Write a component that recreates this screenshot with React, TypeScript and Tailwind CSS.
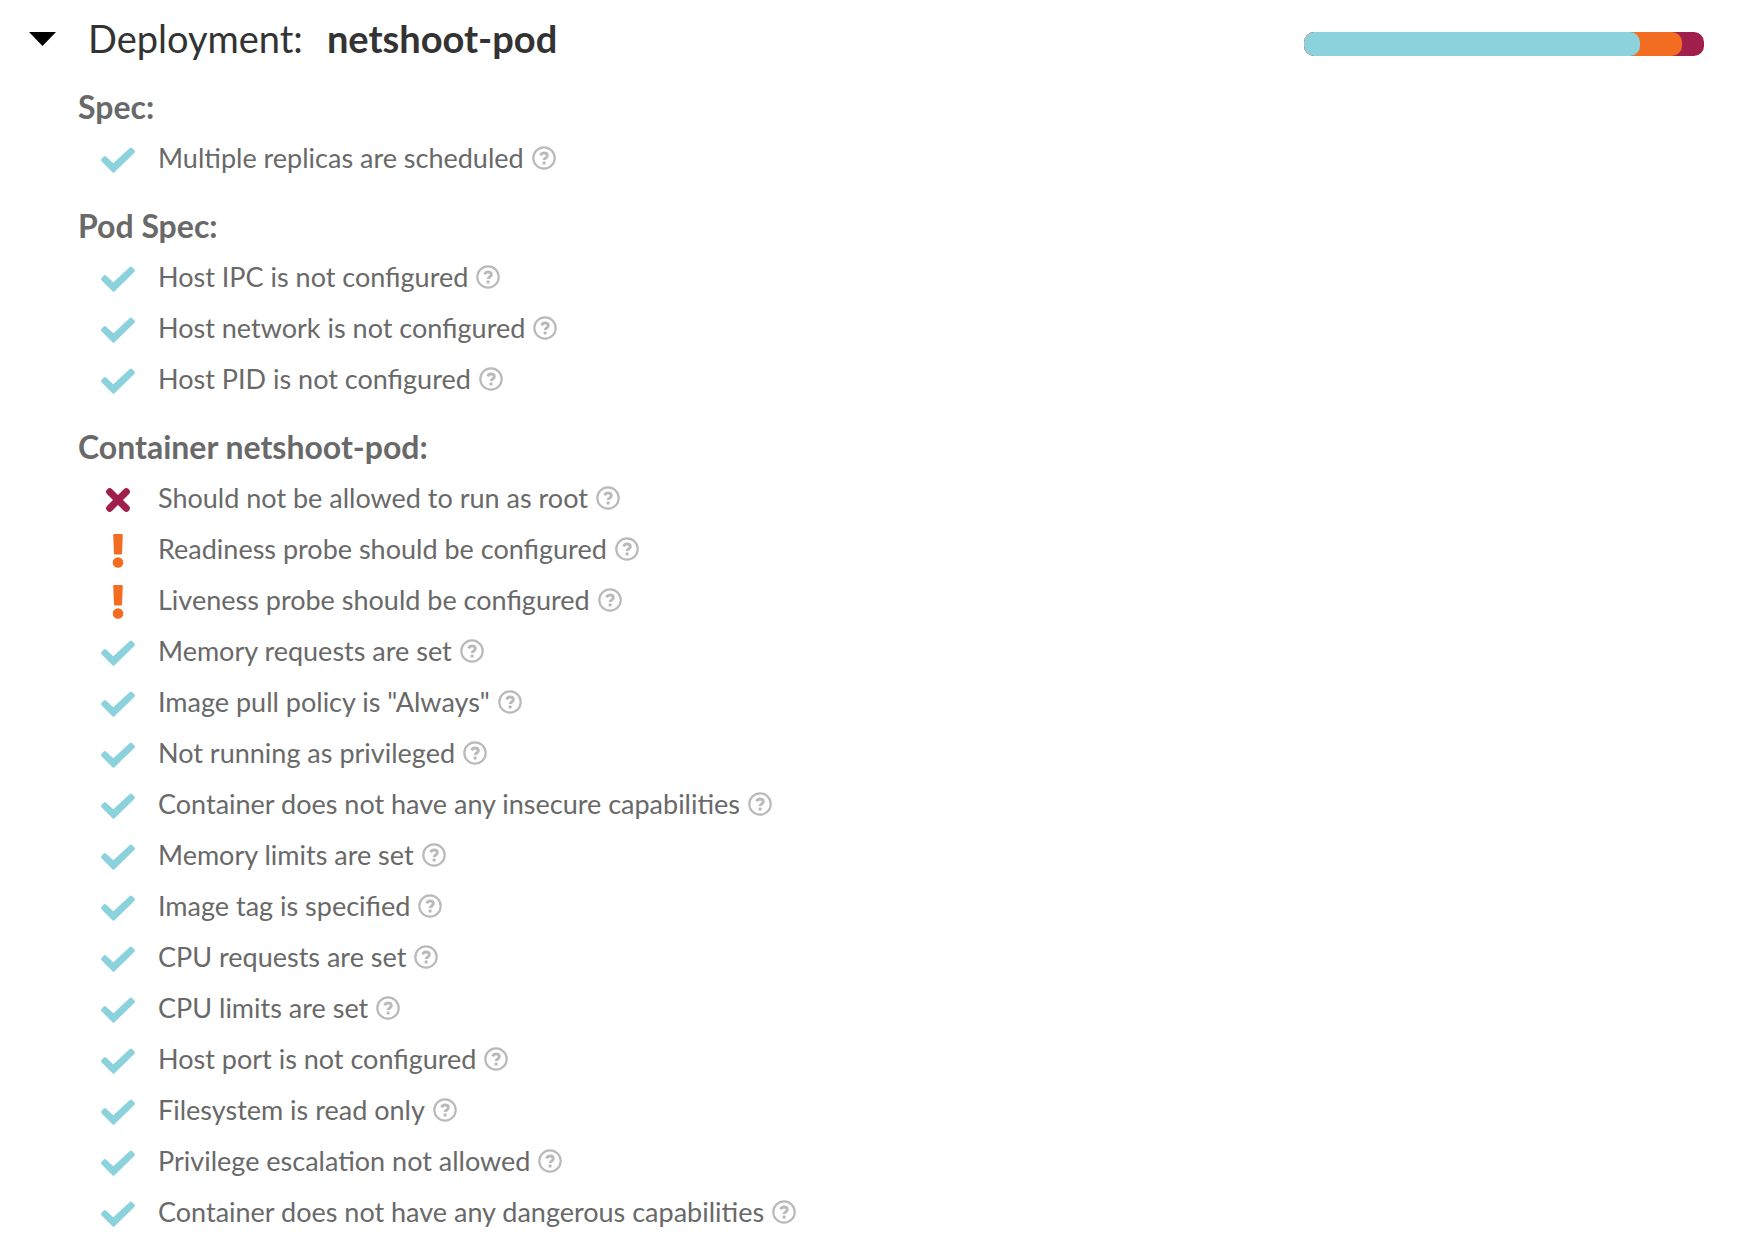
type Status = "success" | "warning" | "danger";
type Check = { label: string; status?: Status };
type Group = { title: string; checks: Check[] };

const groups: Group[] = [
  { title: "Spec:", checks: [{ label: "Multiple replicas are scheduled" }] },
  {
    title: "Pod Spec:",
    checks: [
      { label: "Host IPC is not configured" },
      { label: "Host network is not configured" },
      { label: "Host PID is not configured" },
    ],
  },
  {
    title: "Container netshoot-pod:",
    checks: [
      { label: "Should not be allowed to run as root", status: "danger" },
      { label: "Readiness probe should be configured", status: "warning" },
      { label: "Liveness probe should be configured", status: "warning" },
      { label: "Memory requests are set" },
      { label: 'Image pull policy is "Always"' },
      { label: "Not running as privileged" },
      { label: "Container does not have any insecure capabilities" },
      { label: "Memory limits are set" },
      { label: "Image tag is specified" },
      { label: "CPU requests are set" },
      { label: "CPU limits are set" },
      { label: "Host port is not configured" },
      { label: "Filesystem is read only" },
      { label: "Privilege escalation not allowed" },
      { label: "Container does not have any dangerous capabilities" },
    ],
  },
];

function StatusIcon({ status }: { status: Status }) {
  if (status === "danger") {
    return (
      <svg viewBox="0 0 36 36" className="size-9 fill-none stroke-[#a11f4c]" aria-label="Failed" role="img">
        <path d="M9.700 9.700 26.300 26.300M26.300 9.700 9.700 26.300" strokeWidth="7" strokeLinecap="round" />
      </svg>
    );
  }
  if (status === "warning") {
    return (
      <svg viewBox="0 0 36 36" className="size-9 fill-[#f26c21]" aria-label="Warning" role="img">
        <path d="M14.2 1h7.6q1 0 1 1l-.8 18.500q0 1-1 1h-6q-1 0-1-1L13.200 2q0-1 1-1Z" />
        <circle cx="18" cy="29.500" r="5.300" />
      </svg>
    );
  }
  return (
    <svg viewBox="0 0 36 36" className="size-9 fill-[#8bd2dc]" aria-label="Passed" role="img">
      <path d="M1.500 17 3.800 14.600Q4.800 13.600 5.900 14.500L13.300 21.300 29.900 6Q31 5.100 32 6L34.500 8.500Q35.500 9.700 34.500 10.800L14.300 30.400Q13.500 31.100 12.700 30.400L1.500 19.300Q.500 18.100 1.500 17Z" />
    </svg>
  );
}

function HelpIcon() {
  return (
    <svg viewBox="0 0 24 24" className="size-6 fill-none stroke-[#bababa]" aria-hidden="true">
      <circle cx="12" cy="12" r="10.700" strokeWidth="2.200" />
      <path d="M8.600 9.300C9.400 7.600 10.500 7 12 7c1.900 0 3.300 1.100 3.300 2.700 0 2.200-3.100 2.300-3.100 4.300" strokeWidth="2.900" />
      <circle cx="12.100" cy="17" r="1.700" className="fill-[#bababa] stroke-none" />
    </svg>
  );
}

export default function App() {
  return (
    <main className="bg-white font-['Lato','Open_Sans',sans-serif] text-[#696969]">
      <header className="flex h-20 items-center pr-[38px] pl-[29px]">
        <button type="button" aria-label="Collapse deployment" aria-expanded="true" className="mr-8 mb-0.5 shrink-0">
          <svg viewBox="0 0 27 14" className="h-[14px] w-[27px]" aria-hidden="true">
            <path d="M0 0h27L13.500 14Z" />
          </svg>
        </button>
        <h1 className="mb-1 flex gap-6 text-[38px] leading-[48px] text-[#333333]">
          <span>Deployment:</span>
          <strong className="font-bold">netshoot-pod</strong>
        </h1>
        <div className="mt-2 ml-auto h-6 w-[400px] overflow-hidden rounded-[10px] bg-[#a11f4c]">
          <div className="h-full w-[378px] rounded-[10px] bg-[#f26c21]">
            <div className="h-full w-[336px] rounded-[10px] bg-[#8bd2dc]" />
          </div>
        </div>
      </header>
      <div className="flex flex-col gap-[17px] pt-px pr-8 pb-5 pl-[78px]">
        {groups.map((group) => (
          <section key={group.title}>
            <h2 className="text-[32px] leading-[51px] font-bold">{group.title}</h2>
            <ul className="pl-[22px]">
              {group.checks.map(({ label, status = "success" }) => (
                <li key={label} className="flex h-[51px] items-center">
                  <span className="mt-1 mr-[22px]">
                    <StatusIcon status={status} />
                  </span>
                  <span className="text-[27px] leading-[51px]">{label}</span>
                  <a href="#help" aria-label={"About: " + label} className="ml-2">
                    <HelpIcon />
                  </a>
                </li>
              ))}
            </ul>
          </section>
        ))}
      </div>
    </main>
  );
}
